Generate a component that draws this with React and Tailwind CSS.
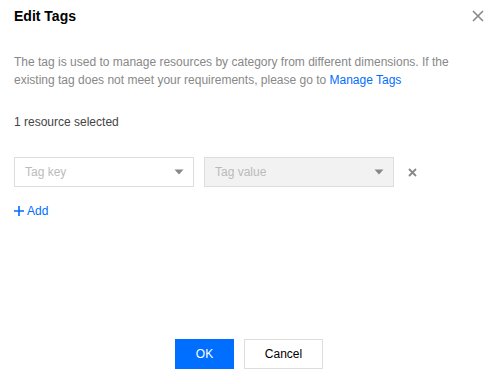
function Caret() {
  return (
    <svg width="10" height="6" viewBox="0 0 10 6" className="shrink-0">
      <path d="M0.5 0.5h9L5 5.5z" fill="#888" />
    </svg>
  )
}

function TagSelect({ placeholder, disabled, width }) {
  return (
    <div
      className={`flex h-[30px] items-center justify-between border border-[#dddddd] pl-[10px] pr-[9px] ${width} ${disabled ? 'bg-[#f2f2f2]' : 'bg-white'}`}
    >
      <span className="text-[12px] text-[#bbbbbb]">{placeholder}</span>
      <Caret />
    </div>
  )
}

export default function App() {
  return (
    <div className="flex h-[384px] w-[496px] flex-col bg-white px-[14px] font-['Liberation_Sans',Arial,sans-serif]">
      <div className="flex items-center justify-between pt-[7px]">
        <h1 className="text-[14px] font-bold leading-[18px] text-black">Edit Tags</h1>
        <svg width="12" height="12" viewBox="0 0 12 12" className="mr-[-2px]">
          <path d="M1 1l10 10M11 1L1 11" stroke="#888" strokeWidth="1.6" />
        </svg>
      </div>

      <p className="mt-[28px] text-[12px] leading-[18px] text-[#888888]">
        The tag is used to manage resources by category from different dimensions. If the existing tag does not meet
        your requirements, please go to <span className="text-[#006eff]">Manage Tags</span>
      </p>

      <p className="mt-[24px] text-[12px] leading-[18px] text-[#444444]">1 resource selected</p>

      <div className="mt-[26px] flex items-center">
        <TagSelect placeholder="Tag key" width="w-[180px]" />
        <div className="ml-[10px]">
          <TagSelect placeholder="Tag value" width="w-[190px]" disabled />
        </div>
        <svg width="9" height="9" viewBox="0 0 9 9" className="ml-[14px]">
          <path d="M1 1l7 7M8 1L1 8" stroke="#888" strokeWidth="1.8" />
        </svg>
      </div>

      <div className="mt-[15px] flex items-center gap-[3px] text-[12px] leading-[18px] text-[#006eff]">
        <svg width="10" height="10" viewBox="0 0 10 10">
          <path d="M5 0v10M0 5h10" stroke="#006eff" strokeWidth="1.6" />
        </svg>
        <span>Add</span>
      </div>

      <div className="mt-auto mb-[15px] flex justify-center gap-[10px] pl-[2px]">
        <button type="button" className="h-[30px] w-[59px] bg-[#006eff] text-[12px] text-white">
          OK
        </button>
        <button type="button" className="h-[30px] w-[79px] border border-[#dddddd] bg-white text-[12px] text-black">
          Cancel
        </button>
      </div>
    </div>
  )
}
